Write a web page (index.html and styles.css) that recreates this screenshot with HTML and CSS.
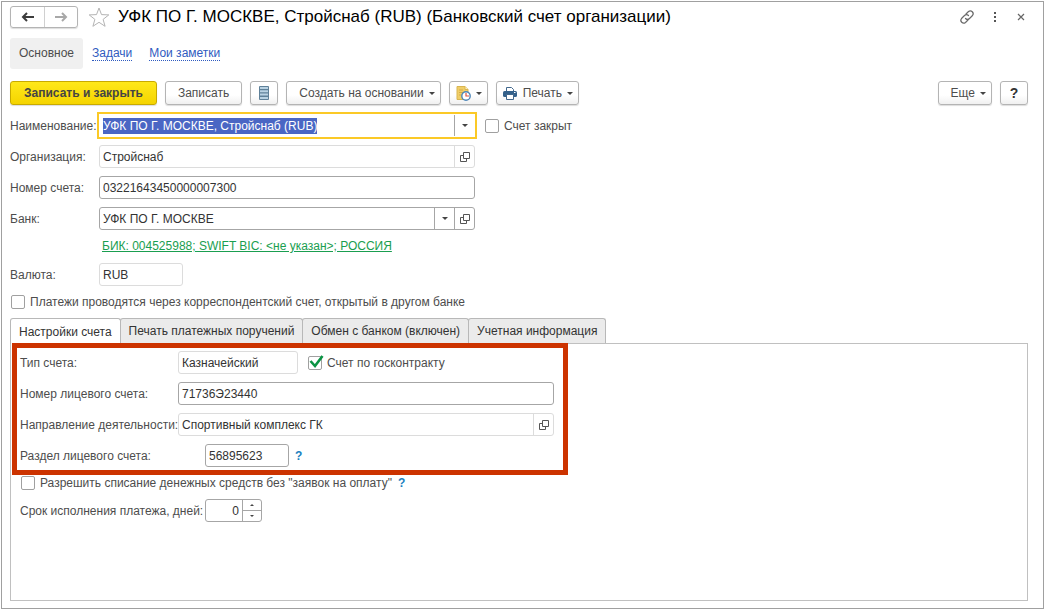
FILE: index.html
```
<!DOCTYPE html>
<html lang="ru">
<head>
  <meta charset="UTF-8">
  <meta name="viewport" content="width=device-width, initial-scale=1.0">
  <title>УФК ПО Г. МОСКВЕ, Стройснаб (RUB) (Банковский счет организации)</title>
  <link rel="stylesheet" href="styles.css">
</head>
<body>
  <div class="window">
    <!-- Title bar -->
    <header class="titlebar">
      <div class="history">
        <button type="button" class="history-btn" aria-label="Назад">
          <svg width="14" height="10" viewBox="0 0 14 10"><path d="M13 5H2M6 1L2 5l4 4" fill="none" stroke="#3c3c3c" stroke-width="2"/></svg>
        </button>
        <button type="button" class="history-btn" aria-label="Вперед">
          <svg width="14" height="10" viewBox="0 0 14 10"><path d="M1 5h11M8 1l4 4-4 4" fill="none" stroke="#a8a8a8" stroke-width="2"/></svg>
        </button>
      </div>
      <button type="button" class="icon-btn star" aria-label="В избранное">
        <svg width="22" height="20" viewBox="0 0 22 20"><path d="M11 1l2.5 6.6 7.3.3-5.7 4.5 2 6.9L11 15.3l-6.100 4 2-6.900L1.200 7.900l7.300-.3z" fill="#fff" stroke="#b4b4b4"/></svg>
      </button>
      <h1>УФК ПО Г. МОСКВЕ, Стройснаб (RUB) (Банковский счет организации)</h1>
      <div class="window-actions">
        <button type="button" class="icon-btn" aria-label="Ссылка">
          <svg width="16" height="16" viewBox="0 0 16 16"><g fill="none" stroke="#6a6a6a" stroke-width="1.200" stroke-linecap="round"><path d="M7 5l2.500-2.500a2.850 2.850 0 0 1 4 4L10.500 9.500a2.850 2.850 0 0 1-4 0"/><path d="M9 11l-2.500 2.500a2.850 2.850 0 0 1-4-4L5.500 6.500a2.850 2.850 0 0 1 4 0"/></g></svg>
        </button>
        <button type="button" class="icon-btn" aria-label="Меню">
          <svg width="4" height="12" viewBox="0 0 4 12"><g fill="#555"><rect x="1" y="1" width="2" height="2"/><rect x="1" y="5" width="2" height="2"/><rect x="1" y="9" width="2" height="2"/></g></svg>
        </button>
        <button type="button" class="icon-btn" aria-label="Закрыть">
          <svg width="8" height="8" viewBox="0 0 8 8"><path d="M1 1l6 6M7 1L1 7" stroke="#666" stroke-width="1.200"/></svg>
        </button>
      </div>
    </header>

    <!-- Form navigation -->
    <nav class="sections">
      <span class="section current">Основное</span>
      <a class="section" href="#tasks"><span>Задачи</span></a>
      <a class="section" href="#notes"><span>Мои заметки</span></a>
    </nav>

    <!-- Command bar -->
    <div class="toolbar">
      <button type="button" class="btn btn-primary">Записать и закрыть</button>
      <button type="button" class="btn">Записать</button>
      <button type="button" class="btn btn-icon" aria-label="Список">
        <svg width="10" height="14" viewBox="0 0 10 14"><rect width="10" height="14" rx="1" fill="#5f8199"/><path d="M1 2h8M1 5.300h8M1 8.600h8M1 12h8" stroke="#b9d2e3" stroke-width="2"/></svg>
      </button>
      <button type="button" class="btn btn-menu">Создать на основании <i class="caret"></i></button>
      <button type="button" class="btn btn-tight" aria-label="Напоминание">
        <svg width="15" height="15" viewBox="0 0 15 15"><path d="M1 .500h8l3 3V13.500H1z" fill="#f0ce68" stroke="#d9b550"/><path d="M9 .500v3h3" fill="#fff3c4" stroke="#d9b550"/><path d="M3 4h4M3 6.500h4M3 9h2" stroke="#d6ad48"/><circle cx="10" cy="10" r="4.200" fill="#fff" stroke="#4d86b8" stroke-width="1.400"/><path d="M10 7v3h3" fill="none" stroke="#e0523f" stroke-width="1.200"/></svg>
        <i class="caret"></i>
      </button>
      <button type="button" class="btn btn-tight">
        <svg width="14" height="13" viewBox="0 0 14 13"><path d="M3.500 5V.500h5l2 2V5" fill="#fff" stroke="#41678c"/><rect y="4" width="14" height="6" rx="1.500" fill="#34618b"/><path d="M3.500 7.500h7v5h-7z" fill="#fff" stroke="#41678c"/><path d="M11 5.500h1.500" stroke="#fff"/></svg>
        <span class="print-text">Печать</span> <i class="caret"></i>
      </button>
      <span class="spacer"></span>
      <button type="button" class="btn btn-menu">Еще <i class="caret"></i></button>
      <button type="button" class="btn btn-help">?</button>
    </div>

    <!-- Account details -->
    <form class="details">
      <div class="row">
        <label for="name">Наименование:</label>
        <div class="field focused">
          <input type="text" id="name" value="УФК ПО Г. МОСКВЕ, Стройснаб (RUB)">
          <button type="button" class="field-btn" aria-label="Выбрать"><i class="caret"></i></button>
        </div>
        <label class="check"><input type="checkbox">Счет закрыт</label>
      </div>
      <div class="row">
        <label for="org">Организация:</label>
        <div class="field readonly">
          <input type="text" id="org" value="Стройснаб" readonly>
          <button type="button" class="field-btn" aria-label="Открыть"><svg class="open" width="10" height="10" viewBox="0 0 10 10"><path d="M3.500.500h6v6h-6zM3 3.500H.500v6h6V7" fill="none" stroke="#555"/></svg></button>
        </div>
      </div>
      <div class="row">
        <label for="number">Номер счета:</label>
        <div class="field"><input type="text" id="number" value="03221643450000007300"></div>
      </div>
      <div class="row">
        <label for="bank">Банк:</label>
        <div class="field">
          <input type="text" id="bank" value="УФК ПО Г. МОСКВЕ">
          <button type="button" class="field-btn" aria-label="Выбрать"><i class="caret"></i></button>
          <button type="button" class="field-btn" aria-label="Открыть"><svg class="open" width="10" height="10" viewBox="0 0 10 10"><path d="M3.500.500h6v6h-6zM3 3.500H.500v6h6V7" fill="none" stroke="#555"/></svg></button>
        </div>
      </div>
      <a class="bank-link" href="#bank">БИК: 004525988; SWIFT BIC: &lt;не указан&gt;; РОССИЯ</a>
      <div class="row">
        <label for="currency">Валюта:</label>
        <div class="field field-short readonly"><input type="text" id="currency" value="RUB" readonly></div>
      </div>
      <label class="check"><input type="checkbox">Платежи проводятся через корреспондентский счет, открытый в другом банке</label>
    </form>

    <!-- Tabs -->
    <div class="tabs" role="tablist">
      <button type="button" class="tab active" role="tab" aria-selected="true">Настройки счета</button>
      <button type="button" class="tab" role="tab">Печать платежных поручений</button>
      <button type="button" class="tab" role="tab">Обмен с банком (включен)</button>
      <button type="button" class="tab" role="tab">Учетная информация</button>
    </div>
    <form class="panel">
      <div class="highlight">
        <div class="row">
          <label for="type">Тип счета:</label>
          <div class="field field-type readonly"><input type="text" id="type" value="Казначейский" readonly></div>
          <label class="check">
            <input type="checkbox" checked>
            <svg class="tick" width="15" height="14" viewBox="0 0 15 14"><path d="M1.500 6l4.500 5L13.500 1" fill="none" stroke="#0b9444" stroke-width="2.600"/></svg>
            Счет по госконтракту
          </label>
        </div>
        <div class="row">
          <label for="personal">Номер лицевого счета:</label>
          <div class="field"><input type="text" id="personal" value="71736Э23440"></div>
        </div>
        <div class="row">
          <label for="activity">Направление деятельности:</label>
          <div class="field readonly">
            <input type="text" id="activity" value="Спортивный комплекс ГК" readonly>
            <button type="button" class="field-btn" aria-label="Открыть"><svg class="open" width="10" height="10" viewBox="0 0 10 10"><path d="M3.500.500h6v6h-6zM3 3.500H.500v6h6V7" fill="none" stroke="#555"/></svg></button>
          </div>
        </div>
        <div class="row row-wide">
          <label for="part">Раздел лицевого счета:</label>
          <div class="field field-short"><input type="text" id="part" value="56895623"></div>
          <button type="button" class="hint">?</button>
        </div>
      </div>
      <div class="rest">
        <div class="row">
          <label class="check"><input type="checkbox">Разрешить списание денежных средств без "заявок на оплату"</label>
          <button type="button" class="hint">?</button>
        </div>
        <div class="row row-wide">
          <label for="days">Срок исполнения платежа, дней:</label>
          <div class="field field-days">
            <input type="text" id="days" value="0">
            <div class="spin">
              <button type="button" aria-label="Больше"><i class="caret caret-small caret-up"></i></button>
              <button type="button" aria-label="Меньше"><i class="caret caret-small"></i></button>
            </div>
          </div>
        </div>
      </div>
    </form>
  </div>

  <script>
    document.getElementById("name").select();
  </script>
</body>
</html>
```
FILE: styles.css
```
* {
    box-sizing: border-box;
}

body {
    margin: 0;
    padding: 1px;
    background: #fff;
    font-family: "Liberation Sans", Arial, sans-serif;
    font-size: 12px;
    line-height: 16px;
    color: #4d4d4d;
}

button,
input {
    font: inherit;
    color: inherit;
}

button {
    padding: 0;
    border: none;
    background: none;
    cursor: pointer;
}

svg {
    display: block;
    flex: none;
}

.window {
    display: flex;
    flex-direction: column;
    min-height: calc(100vh - 2px);
    padding: 4px 15px 7px 8px;
    border: 1px solid #a0a0a0;
}

/* Title bar */
.titlebar {
    display: flex;
    align-items: center;
    height: 22px;
}

.history {
    display: flex;
    height: 22px;
    border: 1px solid #b4b4b4;
    border-radius: 3px;
    box-shadow: 0 1px 1px #ddd;
}

.history-btn {
    display: flex;
    align-items: center;
    justify-content: center;
    width: 33px;
}

.history-btn + .history-btn {
    border-left: 1px solid #d0d0d0;
}

.star {
    margin: 0 8px 0 10px;
}

h1 {
    flex: 1;
    margin: 0;
    font-size: 17px;
    font-weight: normal;
    line-height: 22px;
    color: #000;
}

.window-actions {
    display: flex;
    align-items: center;
    gap: 20px;
    padding-right: 3px;
}

.window-actions .icon-btn:first-child {
    margin-right: -2px;
}

/* Navigation */
.sections {
    display: flex;
    gap: 1px;
    margin-top: 10px;
}

.section {
    padding: 8px;
    line-height: 15px;
    color: #2f5bc0;
    text-decoration: none;
}

.section span {
    border-bottom: 1px dotted #2f5bc0;
}

.section.current {
    padding: 8px 9px;
    border-radius: 3px;
    background: #f0f0f0;
    color: #4d4d4d;
}

/* Toolbar */
.toolbar {
    display: flex;
    gap: 8px;
    margin-top: 12px;
}

.btn {
    display: flex;
    align-items: center;
    justify-content: center;
    height: 24px;
    padding: 0 12px;
    border: 1px solid #b4b4b4;
    border-radius: 3px;
    background: linear-gradient(#fff 60%, #f0f0f0);
    box-shadow: 0 1px 1px #ddd;
    white-space: nowrap;
}

.btn .caret {
    margin-left: 5px;
}

.btn-menu {
    padding: 0 5px 0 12px;
}

.btn-primary {
    padding: 0 13px;
    border-color: #c8aa00;
    background: linear-gradient(#ffe81a, #f5d400);
    font-weight: bold;
    color: #444;
}

.btn-icon {
    width: 28px;
    padding: 0;
}

.btn-tight {
    padding: 0 5px 0 6px;
}

.print-text {
    margin-left: 6px;
}

.btn-help {
    width: 28px;
    padding: 0;
    font-size: 14px;
    font-weight: bold;
    color: #333;
}

.spacer {
    flex: 1;
}

.caret {
    border: 3px solid transparent;
    border-top-color: #444;
    border-bottom: 0;
}

.caret-small {
    border-width: 2px;
    border-bottom-width: 0;
}

.caret-up {
    transform: rotate(180deg);
}

/* Fields */
.details {
    display: flex;
    flex-direction: column;
    gap: 8px;
    margin-top: 9px;
}

.row {
    display: grid;
    grid-template-columns: 89px 376px auto;
    align-items: center;
    justify-content: start;
}

.row > label {
    white-space: nowrap;
}

.field {
    display: flex;
    height: 23px;
    border: 1px solid #a6a6a6;
    border-radius: 3px;
    background: #fff;
}

.field input {
    flex: 1;
    min-width: 0;
    padding: 0 3px;
    border: none;
    outline: none;
    background: none;
    color: #333;
}

.field input::selection {
    background: #4a66c4;
    color: #fff;
}

.field-btn {
    display: flex;
    align-items: center;
    justify-content: center;
    width: 20px;
    border-left: 1px solid #a6a6a6;
}

.field.readonly,
.readonly .field-btn {
    border-color: #dcdcdc;
}

.field.focused {
    border-color: #fff;
    border-radius: 0;
    outline: 2px solid #fbc926;
}

.field-short {
    width: 84px;
}

.field-type {
    width: 120px;
}

.bank-link {
    align-self: flex-start;
    margin-left: 92px;
    line-height: 17px;
    color: #1a9e50;
}

.check {
    position: relative;
    display: flex;
    align-items: center;
    gap: 5px;
}

.row .check {
    margin-left: 9px;
}

.check input {
    flex: none;
    width: 14px;
    height: 14px;
    margin: 0 0 0 1px;
    border: 1px solid #a0a0a0;
    border-radius: 2px;
    background: #fff;
    appearance: none;
}

/* Green mark drawn over the box */
.tick {
    position: absolute;
    top: 0;
    left: 2px;
}

/* Tabs */
.tabs {
    display: flex;
    margin-top: 8px;
}

.tab {
    height: 25px;
    padding: 0 8px;
    border: 1px solid #b8b8b8;
    border-bottom: none;
    border-radius: 3px 3px 0 0;
    background: #ebebeb;
    color: #333;
    white-space: nowrap;
}

.tab + .tab {
    margin-left: -1px;
}

.tab.active {
    z-index: 1;
    height: 26px;
    margin-bottom: -1px;
    background: #fff;
}

.panel {
    flex: 1;
    border: 1px solid #c0c0c0;
}

.highlight {
    display: flex;
    flex-direction: column;
    gap: 8px;
    width: fit-content;
    margin: -1px 0 0 1px;
    padding: 3px 9px 3px 3px;
    border: 5px solid #cc3300;
    position: relative;
    z-index: 2;
}

.panel .row {
    grid-template-columns: 158px 376px;
}

.panel .row:has(.field-type) {
    grid-template-columns: 158px 120px auto;
}

.panel .row-wide {
    grid-template-columns: 185px auto auto;
}

.hint {
    margin-left: 6px;
    font-weight: bold;
    color: #1a7fc0;
}

.rest {
    display: flex;
    flex-direction: column;
    gap: 8px;
    padding-left: 9px;
}

.rest .row:first-child {
    grid-template-columns: auto auto;
}

.rest .check {
    margin-left: 0;
}

.field-days {
    width: 57px;
}

.field-days input {
    text-align: right;
}

.spin {
    display: flex;
    flex-direction: column;
    width: 19px;
    border-left: 1px solid #a6a6a6;
}

.spin button {
    display: flex;
    flex: 1;
    align-items: center;
    justify-content: center;
}

.spin button + button {
    border-top: 1px solid #a6a6a6;
}
```
